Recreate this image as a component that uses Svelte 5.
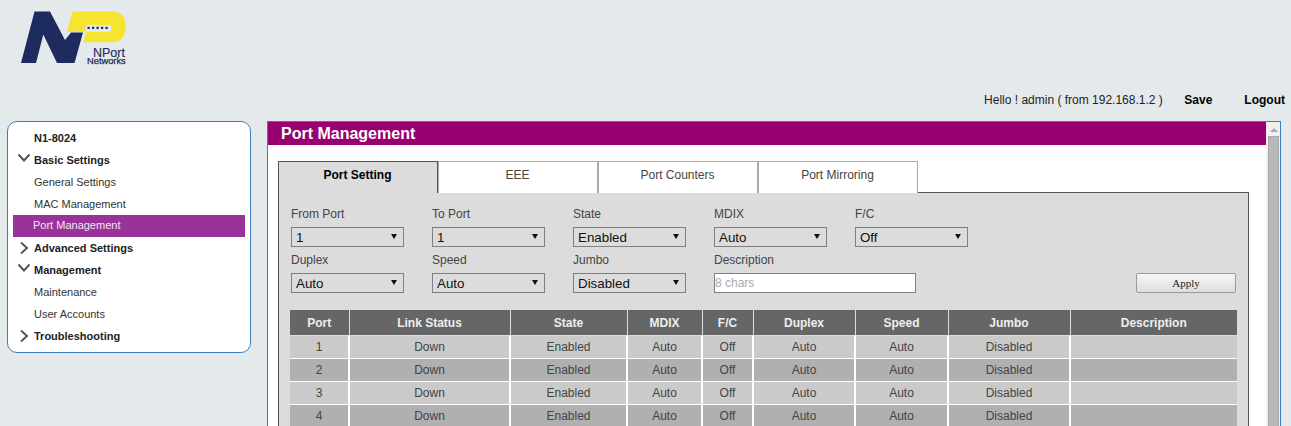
<script>
  const tabs = ['Port Setting', 'EEE', 'Port Counters', 'Port Mirroring'];
  const columns = [
    { name: 'Port', width: 59 },
    { name: 'Link Status', width: 161 },
    { name: 'State', width: 117 },
    { name: 'MDIX', width: 75 },
    { name: 'F/C', width: 51 },
    { name: 'Duplex', width: 102 },
    { name: 'Speed', width: 93 },
    { name: 'Jumbo', width: 122 },
    { name: 'Description', width: 167 }
  ];
  const ports = [1, 2, 3, 4];

  const nav = [
    { label: 'N1-8024', kind: 'root' },
    { label: 'Basic Settings', kind: 'open' },
    { label: 'General Settings', kind: 'leaf' },
    { label: 'MAC Management', kind: 'leaf' },
    { label: 'Port Management', kind: 'active' },
    { label: 'Advanced Settings', kind: 'closed' },
    { label: 'Management', kind: 'open' },
    { label: 'Maintenance', kind: 'leaf' },
    { label: 'User Accounts', kind: 'leaf' },
    { label: 'Troubleshooting', kind: 'closed' }
  ];

  const topFields = [
    { label: 'From Port', value: '1' },
    { label: 'To Port', value: '1' },
    { label: 'State', value: 'Enabled' },
    { label: 'MDIX', value: 'Auto' },
    { label: 'F/C', value: 'Off' }
  ];
  const lowFields = [
    { label: 'Duplex', value: 'Auto' },
    { label: 'Speed', value: 'Auto' },
    { label: 'Jumbo', value: 'Disabled' }
  ];
</script>

<div class="page">
  <header class="top">
    <svg class="logo" viewBox="0 0 110 56" width="110" height="56">
      <path d="M52.7 .5H93C101 .5 105.7 6 105.7 15C105.7 25 101 31.3 93 31.3H63.3L66.5 20H47Z" fill="#f6e431" />
      <rect x="65.7" y="14" width="25.5" height="6.7" rx="2" fill="#e4e9ec" />
      <path d="M1 52L14.5 .5H30L45 29L51 21.5H63L54.5 52H37L23.3 23.5L16 52Z" fill="#1e2b5e" />
      <path d="M48 20.3H64" stroke="#c9ccd6" stroke-width="1" />
      <g fill="#1e2b5e">
        <rect x="67.5" y="15.8" width="2.2" height="2.2" />
        <rect x="72" y="15.8" width="2.2" height="2.2" />
        <rect x="76.5" y="15.8" width="2.2" height="2.2" />
        <rect x="81" y="15.8" width="2.2" height="2.2" />
        <rect x="85.5" y="15.8" width="2.2" height="2.2" />
      </g>
      <text x="73" y="46" class="logo-a">NPort</text>
      <text x="67" y="52.5" class="logo-b">Networks</text>
    </svg>
    <div class="userbar">
      <span>Hello ! admin ( from 192.168.1.2 )</span>
      <a href="#save">Save</a>
      <a href="#logout">Logout</a>
    </div>
  </header>

  <div class="body">
    <nav class="sidebar">
      {#each nav as item}
        <div class="nav-row {item.kind}">
          {#if item.kind === 'open'}
            <svg class="chev" width="14" height="10" viewBox="0 0 14 10"><path d="M1.5 1.5L7 7.5L12.5 1.5" fill="none" stroke="#555" stroke-width="2" /></svg>
          {:else if item.kind === 'closed'}
            <svg class="chev" width="14" height="14" viewBox="0 0 14 14"><path d="M4 1.5L10 7L4 12.5" fill="none" stroke="#555" stroke-width="2" /></svg>
          {/if}
          <span>{item.label}</span>
        </div>
      {/each}
    </nav>

    <main class="content">
      <div class="inner">
        <h1>Port Management</h1>
        <div class="tabs">
          {#each tabs as tab, i}
            <div class="tab" class:current={i === 0}>{tab}</div>
          {/each}
        </div>
        <section class="panel">
          <div class="form">
            {#each topFields as f}
              <div class="field">
                <label for={f.label}>{f.label}</label>
                <div class="select-wrap">
                  <select id={f.label}><option>{f.value}</option></select>
                </div>
              </div>
            {/each}
            {#each lowFields as f}
              <div class="field low">
                <label for={f.label}>{f.label}</label>
                <div class="select-wrap">
                  <select id={f.label}><option>{f.value}</option></select>
                </div>
              </div>
            {/each}
            <div class="field low wide">
              <label for="desc">Description</label>
              <input id="desc" placeholder="8 chars" />
            </div>
            <button class="apply">Apply</button>
          </div>

          <table>
            <colgroup>
              {#each columns as c}
                <col style="width: {c.width}px" />
              {/each}
            </colgroup>
            <thead>
              <tr>
                {#each columns as c}
                  <th>{c.name}</th>
                {/each}
              </tr>
            </thead>
            <tbody>
              {#each ports as p}
                <tr>
                  <td>{p}</td>
                  <td>Down</td>
                  <td>Enabled</td>
                  <td>Auto</td>
                  <td>Off</td>
                  <td>Auto</td>
                  <td>Auto</td>
                  <td>Disabled</td>
                  <td></td>
                </tr>
              {/each}
            </tbody>
          </table>
        </section>
      </div>
      <div class="scrollbar">
        <div class="arrow"></div>
        <div class="thumb"></div>
      </div>
    </main>
  </div>
</div>

<style>
  :global(body) {
    background: #e4e9ec;
    font-family: "Liberation Sans", Arial, sans-serif;
    overflow: hidden;
  }

  .page {
    height: 426px;
    overflow: hidden;
  }

  .top {
    height: 121px;
    position: relative;
    box-sizing: border-box;
    padding: 11px 0 0 20px;
  }

  .logo {
    display: block;
  }

  .logo-a {
    font-size: 12.5px;
    fill: #1e2b5e;
    stroke: #1e2b5e;
    stroke-width: 0.15px;
  }

  .logo-b {
    font-size: 9.3px;
    fill: #1e2b5e;
    stroke: #1e2b5e;
    stroke-width: 0.25px;
  }

  .userbar {
    position: absolute;
    top: 93px;
    right: 6px;
    display: flex;
    font-size: 12px;
    line-height: 14px;
    color: #222;
  }

  .userbar a {
    margin-left: 21.5px;
    color: #000;
    font-weight: bold;
    text-decoration: none;
  }

  .userbar a:last-child {
    margin-left: 32px;
  }

  .body {
    display: flex;
    align-items: flex-start;
    padding-left: 7px;
  }

  .sidebar {
    width: 244px;
    height: 232px;
    box-sizing: border-box;
    padding: 5px 5px 0 5px;
    background: #fff;
    border: 1px solid #3f7fb8;
    border-radius: 10px;
    font-size: 11px;
    color: #333;
  }

  .nav-row {
    height: 22px;
    line-height: 22px;
    padding-left: 21px;
    position: relative;
  }

  .nav-row.root,
  .nav-row.open,
  .nav-row.closed {
    font-weight: bold;
    color: #222;
  }

  .nav-row.active {
    background: #993399;
    color: #f2e6f2;
    padding-left: 20px;
    line-height: 20px;
  }

  .chev {
    position: absolute;
    left: 4px;
    top: 4px;
  }

  .content {
    margin-left: 16px;
    width: 1014px;
    height: 320px;
    box-sizing: border-box;
    display: flex;
    background: #fff;
    border: 1px solid #3f7fb8;
    border-bottom: none;
  }

  .inner {
    width: 998px;
    flex: none;
  }

  h1 {
    margin: 0;
    height: 23px;
    line-height: 23px;
    padding-left: 13px;
    background: #990070;
    color: #fff;
    font-size: 16px;
    font-weight: bold;
  }

  .tabs {
    display: flex;
    margin: 16px 0 0 10px;
  }

  .tab {
    width: 160px;
    height: 32px;
    box-sizing: border-box;
    background: #fff;
    border: 1px solid #aaa;
    border-bottom: none;
    padding-right: 1px;
    text-align: center;
    font-size: 12px;
    line-height: 27px;
    color: #444;
  }

  .tab.current {
    position: relative;
    z-index: 1;
    background: #dcdcdc;
    border: 1px solid #555;
    border-bottom: none;
    font-weight: bold;
    color: #000;
  }

  .panel {
    margin: -1px 0 0 10px;
    width: 971px;
    box-sizing: border-box;
    height: 300px;
    background: #dcdcdc;
    border: 1px solid #555;
    padding: 14px 0 0 11px;
  }

  .form {
    display: grid;
    grid-template-columns: repeat(5, 141px);
    grid-auto-rows: 46px;
    position: relative;
    height: 103px;
    padding-left: 1px;
  }

  .field {
    display: flex;
    flex-direction: column;
  }

  .wide {
    grid-column: span 2;
  }

  label {
    font-size: 12px;
    line-height: 14px;
    height: 20px;
    color: #444;
  }

  .low label {
    margin-top: -0.5px;
    height: 20.5px;
  }

  .select-wrap {
    position: relative;
    width: 113px;
    height: 20px;
  }

  .select-wrap::after {
    content: "";
    position: absolute;
    right: 7px;
    top: 7px;
    border-left: 3.5px solid transparent;
    border-right: 3.5px solid transparent;
    border-top: 5px solid #111;
    pointer-events: none;
  }

  select {
    appearance: none;
    display: block;
    width: 113px;
    height: 20px;
    box-sizing: border-box;
    border: 1px solid #808080;
    border-radius: 0;
    background: #dcdcdc;
    font-family: "Liberation Sans", Arial, sans-serif;
    font-size: 13.33px;
    color: #111;
    padding: 0 0 0 4px;
    margin: 0;
  }

  input {
    width: 202px;
    height: 20px;
    box-sizing: border-box;
    border: 1px solid #808080;
    background: #fff;
    font-family: "Liberation Sans", Arial, sans-serif;
    font-size: 12px;
    padding: 0;
    margin: 0;
  }

  input::placeholder {
    color: #aaa;
  }

  .apply {
    position: absolute;
    left: 846px;
    top: 66px;
    width: 100px;
    height: 20px;
    box-sizing: border-box;
    border: 1px solid #999;
    border-radius: 2px;
    background: linear-gradient(#f6f6f6, #dedede);
    font-family: "Liberation Serif", "Times New Roman", serif;
    font-size: 11px;
    color: #222;
    padding: 0;
  }

  table {
    width: 947px;
    table-layout: fixed;
    border-collapse: collapse;
    font-size: 12px;
  }

  th {
    height: 25px;
    padding: 0;
    background: #666;
    color: #eee;
    font-weight: bold;
    border-left: 1px solid #ddd;
    border-bottom: 1px solid #ddd;
  }

  td {
    height: 22px;
    padding: 0;
    text-align: center;
    color: #444;
    border-left: 2px solid #fff;
    border-bottom: 1px solid #fff;
  }

  th:first-child,
  td:first-child {
    border-left: none;
  }

  tbody tr:nth-child(odd) td {
    background: #cacaca;
  }

  tbody tr:nth-child(even) td {
    background: #b0b0b0;
  }

  .scrollbar {
    width: 14px;
    flex: none;
    box-sizing: border-box;
    background: #f0f0f0;
    padding: 0 1px 0 2px;
  }

  .arrow {
    width: 0;
    height: 0;
    margin: 6px auto 4px;
    border-left: 4px solid transparent;
    border-right: 4px solid transparent;
    border-bottom: 4px solid #aaa;
  }

  .thumb {
    height: 300px;
    background: #b8b8b8;
    border: 1px solid #aaa;
    box-sizing: border-box;
  }
</style>
